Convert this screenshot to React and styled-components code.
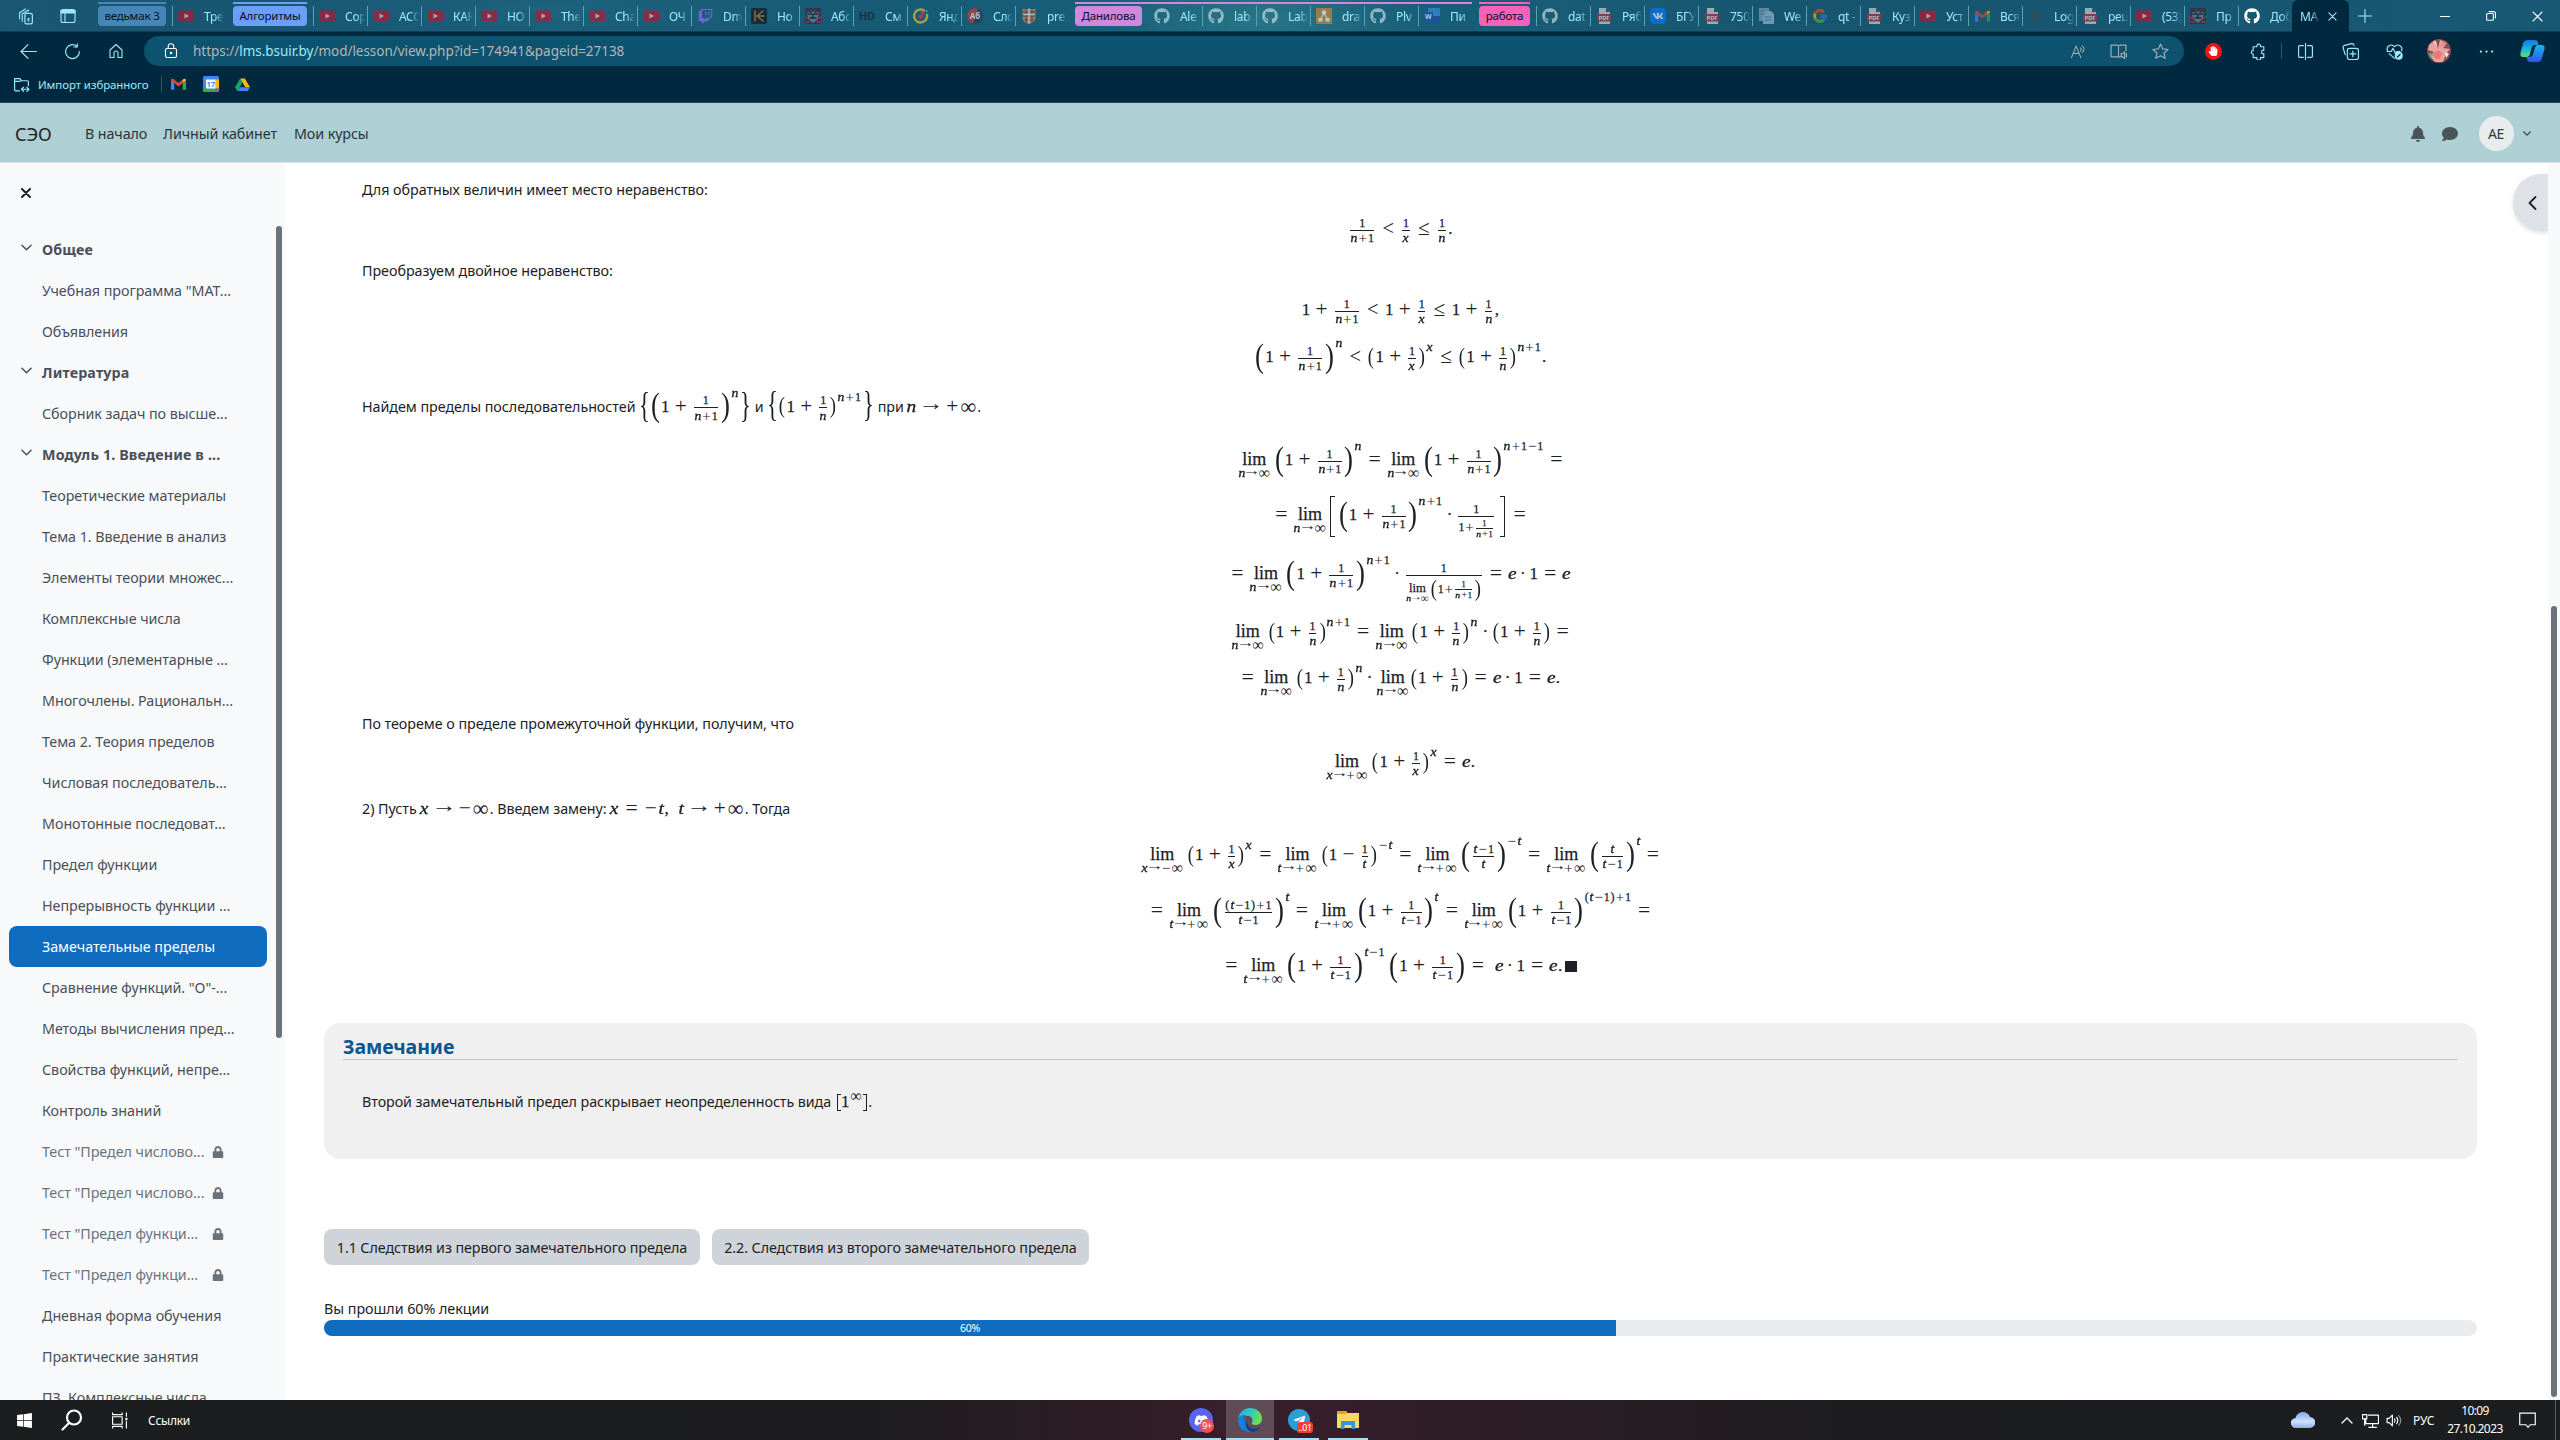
import React from "react";
import styled, { createGlobalStyle, css } from "styled-components";
import {
  FaGithub, FaTwitch, FaVk, FaDiscord, FaTelegramPlane, FaBell, FaComment,
  FaLock, FaHandPaper, FaWindows, FaGraduationCap,
} from "react-icons/fa";
import { FcGoogle } from "react-icons/fc";

const GlobalStyle = createGlobalStyle`
  * { box-sizing: border-box; }
  html, body { margin: 0; padding: 0; overflow: hidden; background: #fff; }
  body { font-family: "Noto Sans", "Open Sans", sans-serif; font-size: 14.3px; color: #1d2125; }
  svg { display: block; flex: none; }
`;

const Screen = styled.div`
  width: 2560px;
  height: 1440px;
  display: flex;
  flex-direction: column;
  overflow: hidden;
`;

/* ---------- browser chrome ---------- */

const TabStrip = styled.div`
  height: 32px;
  flex: none;
  display: flex;
  align-items: flex-start;
  color: #9cebfc;
  font-size: 12px;
  background:
    radial-gradient(ellipse 160px 60px at 1260px 20px, rgba(60, 140, 145, 0.45), transparent),
    radial-gradient(ellipse 300px 50px at 560px 10px, rgba(40, 115, 140, 0.45), transparent),
    linear-gradient(90deg, #1b5672, #155672 25%, #19627d 50%, #18566f 70%, #185875);
  box-shadow: inset 0 -1px 0 #123f57;
`;

const StripButton = styled.div`
  width: ${(p) => p.$w}px;
  height: 32px;
  display: flex;
  align-items: center;
  justify-content: center;
  color: ${(p) => p.$color || "#9cebfc"};
`;

const TabGroup = styled.div`
  display: flex;
  margin-left: ${(p) => p.$ml || 0}px;
  margin-top: 2px;
  padding-top: 2px;
  border-top: 2px solid ${(p) => p.$color};
`;

const GroupChip = styled.div`
  width: ${(p) => p.$w}px;
  height: 20px;
  border-radius: 4px;
  background: ${(p) => p.$color};
  color: #0a0f1c;
  font-size: 11.5px;
  letter-spacing: -0.2px;
  line-height: 20px;
  text-align: center;
  white-space: nowrap;
`;

const TabBox = styled.div`
  width: 54px;
  height: 20px;
  margin-top: ${(p) => (p.$grouped ? 0 : 6)}px;
  border-left: 1px solid ${(p) => (p.$first ? "transparent" : "#58a3b8")};
  padding-left: 5px;
  display: flex;
  align-items: center;
  gap: 10px;
`;

const TabIcon = styled.span`
  width: 16px;
  flex: none;
  display: flex;
  justify-content: center;
  opacity: ${(p) => (p.$bright ? 1 : 0.65)};
`;

const TabText = styled.span`
  width: 20px;
  overflow: hidden;
  white-space: nowrap;
  letter-spacing: -0.3px;
  mask-image: linear-gradient(90deg, #000 55%, transparent 100%);
`;

const ActiveTab = styled.div`
  width: 57px;
  height: 32px;
  padding: 0 10px 0 8px;
  border-radius: 6px 6px 0 0;
  background: #00293f;
  display: flex;
  align-items: center;
  gap: 8px;
`;

const WindowButtons = styled.div`
  margin-left: auto;
  display: flex;
`;

const Toolbar = styled.div`
  height: 38px;
  flex: none;
  display: flex;
  align-items: center;
  background: #00293f;
  color: #9cebfc;
`;

const Slot = styled.div`
  width: ${(p) => p.$w}px;
  display: flex;
  align-items: center;
  justify-content: center;
  flex: none;
  color: ${(p) => p.$color || "inherit"};
`;

const AddressBar = styled.div`
  width: 2040px;
  height: 30px;
  flex: none;
  border-radius: 15px;
  background: #0d526e;
  display: flex;
  align-items: center;
  padding-left: 19px;
`;

const Url = styled.div`
  margin-left: 15px;
  flex: 1;
  font-size: 13.5px;
  letter-spacing: -0.04px;
  color: #b5b5b5;
  b { font-weight: 400; color: #9cebfc; }
`;

const VLine = styled.div`
  width: 1px;
  height: ${(p) => p.$h}px;
  background: ${(p) => p.$color || "#33566a"};
`;

const FavBar = styled.div`
  height: 33px;
  flex: none;
  display: flex;
  align-items: center;
  padding: 0 0 4px 13px;
  background: #00293f;
  color: #9cebfc;
  font-size: 12px;
  border-bottom: 1px solid #1c4c63;
`;

const FavText = styled.span`
  width: 111px;
  margin: 0 12px 0 8px;
  font-size: 11.5px;
  letter-spacing: -0.1px;
  white-space: nowrap;
`;

/* ---------- site header ---------- */

const SiteHeader = styled.div`
  height: 60px;
  flex: none;
  display: flex;
  align-items: center;
  padding: 2px 0 0 15px;
  background: #aed0d4;
  border-bottom: 1px solid #d5e5e9;
  white-space: nowrap;
`;

const Brand = styled.div`
  width: 70px;
  font-size: 18px;
  letter-spacing: -0.1px;
`;

const NavLink = styled.div`
  width: ${(p) => p.$w}px;
  letter-spacing: -0.1px;
  color: #2a3439;
`;

const HeaderTools = styled.div`
  margin-left: auto;
  display: flex;
  align-items: center;
  color: #4a5559;
`;

const Avatar = styled.div`
  width: 35px;
  height: 35px;
  border-radius: 50%;
  background: #e9ecef;
  color: #343a40;
  font-size: 14px;
  letter-spacing: -0.3px;
  display: flex;
  align-items: center;
  justify-content: center;
`;

/* ---------- body ---------- */

const Body = styled.div`
  height: 1237px;
  flex: none;
  display: flex;
`;

const Sidebar = styled.div`
  width: 285px;
  flex: none;
  display: flex;
  background: #f8f9fb;
`;

const SideColumn = styled.div`
  width: 276px;
  padding-left: 9px;
  overflow: hidden;
`;

const CloseRow = styled.div`
  height: 66px;
  padding: 25px 0 0 12px;
`;

const SideItem = styled.div`
  width: 258px;
  height: 41px;
  border-radius: 8px;
  display: flex;
  align-items: center;
  padding-left: 12px;
  white-space: nowrap;
  letter-spacing: ${(p) => (p.$bold ? "0.15px" : "-0.04px")};
  font-weight: ${(p) => (p.$bold ? 700 : 400)};
  color: ${(p) => (p.$active ? "#fff" : p.$dim ? "#6a737b" : "#495057")};
  background: ${(p) => (p.$active ? "#0f6cbf" : "transparent")};
`;

const SideMark = styled.span`
  width: 21px;
  padding-bottom: 4px;
`;

const SideLabel = styled.span`
  width: ${(p) => (p.$dim ? 170 : 201)}px;
`;

const SideThumb = styled.div`
  width: 6px;
  height: 812px;
  margin-top: 63px;
  border-radius: 3px;
  background: #6a737b;
`;

const Content = styled.div`
  width: 2153px;
  margin-left: 39px;
  padding-top: 14px;
`;

const MathInline = styled.span`
  display: inline-flex;
  align-items: center;
  font: 17px "Liberation Serif", serif;
  letter-spacing: 0;
  color: #1d2125;
  -webkit-text-stroke: 0.25px #1d2125;
`;

const Para = styled.div`
  height: ${(p) => p.$h || 24}px;
  margin-top: ${(p) => p.$mt || 0}px;
  padding-left: 38px;
  display: flex;
  align-items: center;
  white-space: pre;
  letter-spacing: -0.04px;
  ${MathInline} { margin-top: 3px; margin-left: ${(p) => p.$pull || 0}px; }
`;

const NoteBox = styled.div`
  height: 136px;
  margin-top: 36px;
  border-radius: 16px;
  background: #f0f0f0;
  padding: 9px 19px 0;
`;

const NoteTitle = styled.div`
  height: 28px;
  border-bottom: 1px solid #9fd2fb;
  color: #0a568f;
  font-size: 19.5px;
  font-weight: 700;
  letter-spacing: -0.1px;
  line-height: 29px;
`;

const NoteText = styled(Para)`
  padding-left: 19px;
  margin-top: 29px;
  letter-spacing: -0.07px;
`;

const ButtonRow = styled.div`
  display: flex;
  gap: 12px;
  margin-top: 70px;
`;

const LessonButton = styled.div`
  width: ${(p) => p.$w}px;
  height: 36px;
  border-radius: 8px;
  background: #ced4da;
  line-height: 37px;
  text-align: center;
  white-space: nowrap;
  letter-spacing: -0.08px;
`;

const ProgressLabel = styled.div`
  height: 24px;
  margin-top: 31px;
  line-height: 26px;
  letter-spacing: -0.03px;
`;

const ProgressTrack = styled.div`
  height: 16px;
  border-radius: 8px;
  background: #e9ecef;
  overflow: hidden;
`;

const ProgressFill = styled.div`
  width: 60%;
  height: 16px;
  background: #0f6cbf;
  color: #fff;
  font-size: 10.5px;
  letter-spacing: -0.3px;
  line-height: 16px;
  text-align: center;
`;

const RightColumn = styled.div`
  margin-left: auto;
  display: flex;
`;

const DrawerToggle = styled.div`
  width: 35px;
  height: 57px;
  margin-top: 11px;
  border-radius: 28px 0 0 28px;
  background: #dee2e6;
  box-shadow: 0 2px 4px rgba(0, 0, 0, 0.12);
  display: flex;
  align-items: center;
  padding-left: 15px;
`;

const PageScroll = styled.div`
  width: 12px;
  background: #f8f9fa;
  padding: 443px 0 0 3px;
`;

const PageThumb = styled.div`
  width: 6px;
  height: 791px;
  border-radius: 3px;
  background: #6a737b;
`;

/* ---------- formulas ---------- */

const Run = styled.span`
  display: inline-flex;
  height: 1em;
  margin-bottom: 0.175em;
`;

const Glyph = styled.span`
  display: inline-flex;
  justify-content: center;
  width: ${(p) => p.$w}em;
  margin: 0 ${(p) => p.$gap}em;
  line-height: 1em;
  ${(p) => p.$it && css`
    font-style: italic;
    -webkit-text-stroke-width: 0.35px;
    transform: scaleX(1.14);
  `}
  ${(p) => p.$zoom && css`
    font-size: ${p.$zoom}em;
    line-height: ${1 / p.$zoom}em;
    width: ${p.$w / p.$zoom}em;
    margin: 0 ${p.$gap / p.$zoom}em;
    -webkit-text-stroke-width: 0;
  `}
  ${(p) => p.$arrow && css`transform: translateY(-0.13em) scaleX(1.3);`}
`;

const Formula = styled.div`
  height: 40px;
  margin-top: ${(p) => p.$mt}px;
  display: flex;
  align-items: center;
  justify-content: center;
  ${MathInline} > ${Run}:first-child > ${Glyph}:first-child { margin-left: 0; }
  ${MathInline} > ${Run}:last-child > ${Glyph}:last-child { margin-right: 0; }
`;

const FracBox = styled.span`
  display: inline-grid;
  grid-template-rows: 1fr 1px 1fr;
  justify-items: center;
  font-size: 0.707em;
  margin: 0 0.18em;
`;

const FracNum = styled.span`
  display: flex;
  align-items: center;
  align-self: end;
  margin-bottom: -0.13em;
`;

const FracBar = styled.span`
  width: 100%;
  height: 1px;
  background: #1d2125;
`;

const FracDen = styled.span`
  display: flex;
  align-items: center;
  align-self: start;
  padding-top: ${(p) => (p.$deep ? 0 : 0.14)}em;
`;

const Sup = styled.span`
  display: inline-flex;
  font-size: 0.707em;
  margin-right: 0.07em;
  padding-bottom: ${(p) => p.$lift * 2}px;
`;

const LimBox = styled.span`
  display: inline-grid;
  grid-template-rows: 1fr auto 1fr;
  justify-items: center;
  margin-right: ${(p) => (p.$tight ? 0.02 : 0.18)}em;
`;

const LimWord = styled.span`
  height: 1em;
  line-height: 0.86em;
  font-size: 1.06em;
`;

const LimUnder = styled.span`
  display: flex;
  font-size: 0.707em;
  margin-top: -0.25em;
`;

const Delim = styled.span`
  width: ${(p) => p.$w}px;
  height: ${(p) => p.$h}px;
  display: inline-flex;
  justify-content: center;
  font-size: ${(p) => p.$h * 1.16}px;
  line-height: ${(p) => p.$h * 0.84}px;
  -webkit-text-stroke-width: 0;
  span { transform: scaleX(${(p) => p.$sx || 0.8}); }
`;

const Bracket = styled.span`
  width: ${(p) => p.$w}px;
  height: ${(p) => p.$h}px;
  border: 1px solid #1d2125;
  border-${(p) => (p.$right ? "left" : "right")}: 0;
  margin: 0 ${(p) => p.$m || 0}px;
`;

const Gap = styled.span`
  width: ${(p) => p.$w}px;
`;

const EndMark = styled.span`
  width: 12px;
  height: 11px;
  margin: 0 0 2px 2px;
  background: #1d2125;
`;

const K = 1.06;
const WIDTHS = {
  n: 0.6, x: 0.572, t: 0.361, e: 0.466, "+": 0.778, "−": 0.778, "=": 0.778, "<": 0.778, "≤": 0.778,
  "→": 1, "∞": 1, "·": 0.278, ".": 0.278, ",": 0.278, "(": 0.389, ")": 0.389,
};
const ZOOMS = { "∞": 1.3, "→": 1.15, "+": 1.25, "−": 1.25, "=": 1.28, "<": 1.2, "≤": 1.25 };
const RELATIONS = "=<≤→";
const BINARIES = "+−·";

function M({ children, tight, unary }) {
  return (
    <Run>
      {[...children].map((c, i) => {
        const gap = tight || (unary && c !== "=" && c !== "→") ? 0 : RELATIONS.includes(c) ? 0.278 : BINARIES.includes(c) ? 0.222 : 0;
        return (
          <Glyph key={i} $w={(WIDTHS[c] || 0.5) * K} $gap={gap * K} $it={"nxte".includes(c)} $zoom={ZOOMS[c]} $arrow={c === "→"}>
            {c}
          </Glyph>
        );
      })}
    </Run>
  );
}

function Frac({ n, d, deep }) {
  return (
    <FracBox>
      <FracNum>{typeof n === "string" ? <M tight>{n}</M> : n}</FracNum>
      <FracBar />
      <FracDen $deep={deep}>{typeof d === "string" ? <M tight>{d}</M> : d}</FracDen>
    </FracBox>
  );
}

function Paren({ h = 29, pow, children }) {
  const w = h > 25 ? 10.6 : 8;
  return (
    <>
      <Delim $w={w} $h={h}><span>(</span></Delim>
      {children}
      <Delim $w={w} $h={h}><span>)</span></Delim>
      {pow && <Sup $lift={h > 25 ? 13.5 : 9.5}><M tight>{pow}</M></Sup>}
    </>
  );
}

function Lim({ to = "n→∞", tight }) {
  return (
    <LimBox $tight={tight}>
      <span />
      <LimWord>lim</LimWord>
      <LimUnder><M tight>{to}</M></LimUnder>
    </LimBox>
  );
}

const Sum = ({ d, op = "+" }) => (<><M>{"1" + op}</M><Frac n="1" d={d} /></>);
const Row = ({ mt, children }) => (<Formula $mt={mt}><MathInline>{children}</MathInline></Formula>);

/* ---------- icons ---------- */

const Svg = ({ s = 16, w, h, vb, children, ...rest }) => (
  <svg width={w || s} height={h || s} viewBox={vb || "0 0 16 16"} fill="none" stroke="currentColor" strokeWidth="1.1" strokeLinecap="round" strokeLinejoin="round" {...rest}>{children}</svg>
);

const YouTube = () => (
  <Svg stroke="none"><rect y="2.5" width="16" height="11" rx="3" fill="#c3122c" /><path d="M6.5 5.5v5L11 8z" fill="#e8d6da" /></Svg>
);
const Pdf = () => (
  <Svg stroke="none">
    <path d="M3 0h7l4 4v12H3z" fill="#d5dcdf" /><path d="M10 0v4h4z" fill="#274a5c" />
    <rect x="1" y="6" width="14" height="7.5" rx="1" fill="#b8323c" />
    <text x="8" y="12" textAnchor="middle" fontSize="5.4" fontWeight="700" fontFamily="Noto Sans" fill="#fff">PDF</text>
  </Svg>
);
const Art = () => (
  <Svg stroke="none"><rect width="16" height="16" fill="#4a2434" /><path d="M2 5l3-3 3 2 3-2 3 3-1 6-5 4-5-4z" fill="#77828f" /><path d="M3 6h4M9 6h4M5 10h6M8 7v2M4 3l2 1M12 3l-2 1" stroke="#1d1a24" strokeWidth="1.5" /><path d="M0 9l2 1M16 9l-2 1M1 14h3M12 14h3" stroke="#c01c2c" strokeWidth="1.8" /></Svg>
);
const Kaggle = () => (
  <Svg stroke="none"><rect width="16" height="16" rx="2" fill="#161616" /><path d="M4 3v10M6 8l6-5M6 8h7M6 8l6 5" stroke="#c9772c" strokeWidth="1.5" /></Svg>
);
const Hd = () => (<Svg stroke="none"><text x="8" y="12" textAnchor="middle" fontSize="11" fontWeight="700" fontFamily="Liberation Sans" fill="#1c1c1c">HD</text></Svg>);
const Music = () => (
  <Svg><path d="M11 2.500A6.500 6.500 0 1 0 14 7" stroke="#f4c524" strokeWidth="2.400" /><circle cx="7.500" cy="9" r="2" fill="#f33" stroke="none" /><path d="M9 9V3l2 2" stroke="#f33" strokeWidth="1.600" /><circle cx="13.700" cy="3.200" r="1" fill="#4cf" stroke="none" /></Svg>
);
const Translate = () => (
  <Svg stroke="none"><circle cx="8" cy="8" r="8" fill="#333b46" /><path d="M8 0a8 8 0 0 0-2 15.700L11 0.600z" fill="#d23a35" /><text x="8" y="11" textAnchor="middle" fontSize="8" fontWeight="700" fontFamily="Noto Sans" fill="#fff">Aб</text></Svg>
);
const Shield = () => (
  <Svg stroke="none"><path d="M1.500 1h13v8c0 4-3 6-6.500 7-3.500-1-6.500-3-6.500-7z" fill="#c9a24a" /><path d="M2 4h12M2 8h12M4 12h8M5 1v13M8 1v14M11 1v13" stroke="#a23a4a" strokeWidth="1.300" /><path d="M8 1v14M3 6.500h10" stroke="#eee" strokeWidth="1.600" /></Svg>
);
const Drawio = () => (
  <Svg stroke="none"><rect width="16" height="16" rx="1" fill="#d9862a" /><path d="M8 5l-3.500 6M8 5l3.500 6" stroke="#fff" /><rect x="6" y="2.500" width="4" height="3.500" fill="#fff" /><rect x="2.500" y="10" width="4" height="3.500" fill="#fff" /><rect x="9.500" y="10" width="4" height="3.500" fill="#fff" /></Svg>
);
const Word = () => (
  <Svg stroke="none"><rect x="4" width="12" height="16" rx="1" fill="#3f8fe0" /><rect x="4" y="8" width="12" height="8" fill="#1c4fa8" /><rect y="4" width="9" height="9" rx="1" fill="#1a53ac" /><text x="4.500" y="11" textAnchor="middle" fontSize="7" fontWeight="700" fontFamily="Noto Sans" fill="#fff">W</text></Svg>
);
const Vk = () => (<Svg stroke="none"><rect width="16" height="16" rx="4" fill="#0a77ff" /><FaVk x="2.500" y="2.500" size={11} color="#fff" /></Svg>);
const Docs = () => (
  <Svg stroke="none"><path d="M1 0h10v13H1z" fill="#7fa8c4" /><path d="M5 3h8l3 3v10H5z" fill="#9fc0d6" /><path d="M3 3h4M3 6h4M7 9h6M7 12h6" stroke="#4f7f9e" /></Svg>
);
const Gmail = ({ s = 15 }) => (
  <Svg s={s} stroke="none"><path d="M0 3v10.500h3.500V6L0 3z" fill="#4285f4" /><path d="M12.500 6v7.500H16V3z" fill="#34a853" /><path d="M0 3.500L8 10l8-6.500c0-1.500-2-2-3-1L8 6.500l-5-4c-1-1-3-.500-3 1z" fill="#ea4335" /><path d="M12.500 6L16 3.500c0-1.500-2-2-3.500-.8z" fill="#fbbc04" /></Svg>
);
const Calendar = () => (
  <Svg stroke="none"><rect width="16" height="16" rx="1.500" fill="#4285f4" /><path d="M12.500 3.500H16v9h-3.500z" fill="#fbbc04" /><path d="M0 12.500h12.500V16H1.500A1.500 1.500 0 0 1 0 14.500z" fill="#34a853" /><path d="M12.500 16v-3.500H16z" fill="#ea4335" /><rect x="3" y="3.500" width="9.500" height="9" fill="#fff" /><text x="7.700" y="11" textAnchor="middle" fontSize="7.500" fontWeight="700" fontFamily="Noto Sans" fill="#4285f4">17</text></Svg>
);
const Drive = () => (
  <Svg s={15} stroke="none"><path d="M5.500 1.500h5L16 11h-5z" fill="#fbbc04" /><path d="M5.500 1.500L0 11l2.500 4L8 5.800z" fill="#1ea362" /><path d="M5 11h11l-2.500 4h-11z" fill="#4285f4" /></Svg>
);
const Chevron = ({ w = 12, h = 7, sw = 1.6 }) => (<Svg w={w} h={h} vb="0 0 12 7" strokeWidth={sw}><path d="M1 1l5 5 5-5" /></Svg>);
const Cross = ({ s = 10, sw = 1.2 }) => (<Svg s={s} vb="0 0 10 10" strokeWidth={sw}><path d="M1 1l8 8M9 1l-8 8" /></Svg>);

const Edge = () => (
  <svg width="24" height="24" viewBox="0 0 24 24">
    <defs>
      <linearGradient id="edgeTop" x1="0" y1="0" x2="1" y2="0.3"><stop offset="0" stopColor="#28a9ea" /><stop offset="0.6" stopColor="#35c9c0" /><stop offset="1" stopColor="#6be04c" /></linearGradient>
      <linearGradient id="edgeLow" x1="0" y1="0" x2="1" y2="1"><stop offset="0" stopColor="#1b8de0" /><stop offset="1" stopColor="#0c4fa0" /></linearGradient>
    </defs>
    <path d="M.2 10.500C1.300 4.500 6 0 12 0c7 0 12 5 12 10.500 0 4-2.800 6.500-6.500 6.500-3 0-4.300-1.200-3.700-2.200 1.700-2.500.5-7-5-7C4.500 7.800.8 8.500.2 10.500z" fill="url(#edgeTop)" />
    <path d="M.1 11C.6 8.600 4 6.500 8.200 7 5 9 4.500 13 6.500 17c1.700 3.600 5 6 8.500 6.600C7 25.500-.5 20 .1 11z" fill="#1683d8" />
    <path d="M8.700 9.500c-2.500 2.500-2 7 .5 9.500 3.200 3 8.800 3.200 12.800.2C18 24.500 12.500 25 8.500 21.500 4.500 18 4.500 11 8.700 9.500z" fill="url(#edgeLow)" />
    <path d="M9 12c-1.500 5 3.500 9.500 9 8.800 1.500-.3 3-.8 4-1.700-1.500 2.500-4 4.300-7 4.700C9.500 23.500 6 17 9 12z" fill="#0d3f85" />
  </svg>
);
const Copilot = () => (
  <svg width="25" height="24" viewBox="0 0 25 24">
    <defs>
      <linearGradient id="copA" x1="0" y1="0" x2="0" y2="1"><stop offset="0" stopColor="#1577e6" /><stop offset="0.5" stopColor="#16b4df" /><stop offset="1" stopColor="#5fdc7a" /></linearGradient>
      <linearGradient id="copB" x1="0" y1="0" x2="0" y2="1"><stop offset="0" stopColor="#17b5ee" /><stop offset="1" stopColor="#2f55e8" /></linearGradient>
    </defs>
    <path d="M8 1h7c2 0 2.500 1 3 3l.5 2h-4c-2 0-2.500 1-3 3l-1.500 6c-.5 2-1.500 3-3.500 3H3c-2 0-3-1.500-2.500-4l2.500-9c.8-3 2-4 5-4z" fill="url(#copA)" />
    <path d="M17 23h-7c-2 0-2.500-1-3-3l-.5-2h3c2 0 3-1 3.500-3L15 9c.5-2 1.500-3 3.500-3H22c2 0 3 1.500 2.500 4L22 19c-.8 3-2 4-5 4z" fill="url(#copB)" />
  </svg>
);

const gh = (b) => <FaGithub size={16} color={b ? "#fff" : "#cfe2ea"} />;
const MAIN_TABS = [
  [<YouTube />, "Соp"], [<YouTube />, "АСО"], [<YouTube />, "КАК"], [<YouTube />, "НО"], [<YouTube />, "The"], [<YouTube />, "Cha"], [<YouTube />, "ОЧ"],
  [<FaTwitch size={15} color="#9a6cff" />, "Dm"], [<Kaggle />, "Ho"], [<Art />, "Абс"], [<Hd />, "См"], [<Music />, "Янд"], [<Translate />, "Сло"], [<Shield />, "pre"],
];
const DANILOVA_TABS = [[gh(), "Ale"], [gh(), "lab"], [gh(), "Lab"], [<Drawio />, "dra"], [gh(), "Plv"], [<Word />, "Пи"]];
const WORK_TABS = [
  [gh(), "dat"], [<Pdf />, "Ряб"], [<Vk />, "БГУ"], [<Pdf />, "750"], [<Docs />, "We"], [<FcGoogle size={16} />, "qt -"], [<Pdf />, "Куз"], [<YouTube />, "Уст"],
  [<Gmail />, "Вся"], [<FaGraduationCap size={15} color="#3c4850" />, "Log"], [<Pdf />, "рец"], [<YouTube />, "(53)"], [<Art />, "Пр"], [gh(true), "Доб", true],
];

const Tab = ({ data, grouped, first }) => (
  <TabBox $grouped={grouped} $first={first}>
    <TabIcon $bright={data[2]}>{data[0]}</TabIcon>
    <TabText>{data[1]}</TabText>
  </TabBox>
);

/* ---------- taskbar ---------- */

const Taskbar = styled.div`
  height: 40px;
  flex: none;
  display: flex;
  align-items: center;
  color: #fff;
  background: linear-gradient(90deg, #1b1d1f 0, #1d1d1f 34%, #2a1c22 42%, #371f2b 48%, #351f2a 52%, #2a1c24 60%, #1d1d20 72%, #1b1d1f 100%);
`;

const TaskText = styled.div`
  margin-left: 6px;
  width: 980px;
  font-size: 12px;
  letter-spacing: -0.25px;
`;

const TaskApp = styled.div`
  width: ${(p) => p.$w}px;
  height: 40px;
  margin-right: ${(p) => p.$mr}px;
  display: flex;
  align-items: center;
  justify-content: center;
  border-bottom: 2px solid #a9ddf7;
  padding-top: 2px;
  background: ${(p) => (p.$on ? "#5f4c56" : "transparent")};
`;

const AppDisc = styled.div`
  position: relative;
  width: ${(p) => p.$s}px;
  height: ${(p) => p.$s}px;
  border-radius: 50%;
  background: ${(p) => p.$bg};
  display: flex;
  align-items: center;
  justify-content: center;
`;

const Badge = styled.span`
  position: absolute;
  left: ${(p) => p.$x}px;
  top: ${(p) => p.$y}px;
  width: ${(p) => p.$w}px;
  height: ${(p) => p.$h}px;
  border-radius: ${(p) => p.$r}px;
  background: ${(p) => p.$bg};
  color: #fff;
  font-size: 9px;
  letter-spacing: -0.4px;
  line-height: ${(p) => p.$h}px;
  text-align: center;
`;

const Tray = styled.div`
  margin-left: auto;
  display: flex;
  align-items: center;
`;

const Lang = styled.div`
  width: 34px;
  padding-left: 3px;
  font-size: 12px;
  letter-spacing: -0.1px;
`;

const Clock = styled.div`
  width: 62px;
  font-size: 12px;
  line-height: 18px;
  letter-spacing: -0.6px;
  text-align: center;
`;

const SIDE = [
  ["Общее", "b"], ['Учебная программа "МАТ...'], ["Объявления"], ["Литература", "b"], ["Сборник задач по высше..."],
  ["Модуль 1. Введение в ...", "b"], ["Теоретические материалы"], ["Тема 1. Введение в анализ"], ["Элементы теории множес..."],
  ["Комплексные числа"], ["Функции (элементарные ..."], ["Многочлены. Рациональн..."], ["Тема 2. Теория пределов"],
  ["Числовая последователь..."], ["Монотонные последоват..."], ["Предел функции"], ["Непрерывность функции ..."],
  ["Замечательные пределы", "a"], ['Сравнение функций. "О"-...'], ["Методы вычисления пред..."], ["Свойства функций, непре..."],
  ["Контроль знаний"], ['Тест "Предел числово...', "l"], ['Тест "Предел числово...', "l"], ['Тест "Предел функци...', "l"],
  ['Тест "Предел функци...', "l"], ["Дневная форма обучения"], ["Практические занятия"], ["ПЗ. Комплексные числа"],
];

export default function App() {
  return (
    <Screen>
      <GlobalStyle />
      <TabStrip>
        <StripButton $w={52}><Svg s={17}><rect x="6.500" y="5" width="7" height="10" rx="1.500" /><path d="M4 12.500V5.500L10 2M1.500 10V4.500L7 1" /><path d="M10.500 10h-1v2h1" /></Svg></StripButton>
        <StripButton $w={32}><Svg s={16}><rect x="1" y="1.500" width="14" height="13" rx="2" /><path d="M1 2.500h14v2.500H1z" fill="currentColor" /><path d="M5 5v9" /></Svg></StripButton>
        <TabGroup $ml={14} $color="#4687b8"><GroupChip $w={68} $color="#4687b8">ведьмак 3</GroupChip></TabGroup>
        <Gap $w={6} />
        <Tab data={[<YouTube />, "Тре"]} />
        <Gap $w={7} />
        <TabGroup $color="#6b9ffa"><GroupChip $w={74} $color="#6b9ffa">Алгоритмы</GroupChip></TabGroup>
        <Gap $w={6} />
        {MAIN_TABS.map((t, i) => <Tab key={i} data={t} />)}
        <Gap $w={6} />
        <TabGroup $color="#d087dc">
          <GroupChip $w={67} $color="#d087dc">Данилова</GroupChip>
          <Gap $w={6} />
          {DANILOVA_TABS.map((t, i) => <Tab key={i} data={t} grouped first={i === 0} />)}
        </TabGroup>
        <Gap $w={7} />
        <TabGroup $color="#f462bb"><GroupChip $w={51} $color="#f462bb">работа</GroupChip></TabGroup>
        <Gap $w={6} />
        {WORK_TABS.map((t, i) => <Tab key={i} data={t} />)}
        <ActiveTab><TabText>МА</TabText><Cross s={9} /></ActiveTab>
        <StripButton $w={32}><Svg s={14} vb="0 0 14 14"><path d="M7 0.500v13M.5 7h13" /></Svg></StripButton>
        <WindowButtons>
          <StripButton $w={46} $color="#fff"><Svg s={10} vb="0 0 10 10" strokeWidth="1.200"><path d="M0 5.500h10" /></Svg></StripButton>
          <StripButton $w={46} $color="#fff"><Svg s={10} vb="0 0 10 10"><rect x=".6" y="2.500" width="6.800" height="6.800" rx="1" /><path d="M3 .6h4.500a2 2 0 0 1 2 2V7" /></Svg></StripButton>
          <StripButton $w={46} $color="#fff"><Cross s={11} /></StripButton>
        </WindowButtons>
      </TabStrip>

      <Toolbar>
        <Slot $w={56}><Svg s={17}><path d="M15.500 8H1M7.500 1.500L1 8l6.500 6.500" /></Svg></Slot>
        <Slot $w={32}><Svg s={17}><path d="M14.500 8A6.500 6.500 0 1 1 12 3M12.500 .8v3H9.300" /></Svg></Slot>
        <Slot $w={56}><Svg s={16}><path d="M2 7l6-5.500L14 7v7.500h-4V10a2 2 0 0 0-4 0v4.500H2z" /></Svg></Slot>
        <AddressBar>
          <Slot $w={15} $color="#fff"><Svg s={16}><rect x="2.500" y="5.500" width="11" height="9" rx="1.500" /><path d="M5.200 5.500V3.500a2.800 2.800 0 0 1 5.600 0v2" /><circle cx="8" cy="10" r=".7" fill="#fff" /></Svg></Slot>
          <Url>https://<b>lms.bsuir.by</b>/mod/lesson/view.php?id=174941&amp;pageid=27138</Url>
          <Slot $w={40} $color="#9db0b8"><Svg s={15}><path d="M.5 14.500L5.500 2l5 12.500M2.500 10h6M10 4c1 1 1 2.500 0 3.500M12 2c2.500 2 2.500 5 0 7" /></Svg></Slot>
          <Slot $w={40} $color="#9db0b8"><Svg s={17}><path d="M8 2.500v10.500M8 13H1V2h6l1 .7L9 2h6v5M8 13h1.500M10.500 10v3h1.500l1.800 1.700V8.300L12 10zM15.500 10v3" /></Svg></Slot>
          <Slot $w={44} $color="#9db0b8"><Svg s={17}><path d="M8 1l2.100 4.600 5 .5-3.800 3.300 1.100 5L8 11.900 3.600 14.400l1.100-5L.9 6.100l5-.5z" /></Svg></Slot>
          <Gap $w={2} />
        </AddressBar>
        <Slot $w={58}><AppDisc $s={17} $bg="#f01414"><FaHandPaper size={10} color="#fff" /></AppDisc></Slot>
        <Slot $w={32}><Svg s={17}><path d="M5 3.500h1.500a1.800 1.800 0 1 1 3.400 0H13V7h-.6a1.600 1.600 0 1 0 0 3.200h.6v3.500H9.900a1.800 1.800 0 1 1-3.400 0H3V10.500a1.700 1.700 0 1 1 0-3.400V3.500z" /></Svg></Slot>
        <Slot $w={14}><VLine $h={16} /></Slot>
        <Slot $w={34}><Svg s={17}><path d="M6 2.500H2.500a1 1 0 0 0-1 1v9a1 1 0 0 0 1 1H6M10 2.500h3.500a1 1 0 0 1 1 1v9a1 1 0 0 1-1 1H10M8 .5v15" /></Svg></Slot>
        <Slot $w={56}><Svg s={17}><rect x="5" y="5" width="10.500" height="10.500" rx="2" /><path d="M10.200 7.500v5.500M7.500 10.200H13M3 11L1 4.500a2 2 0 0 1 1.400-2.300L9 .6a2 2 0 0 1 2.300 1.600" /></Svg></Slot>
        <Slot $w={32}><Svg s={17}><path d="M1.500 7.500C-.5 3 5 0 8 3.500 11 0 16.500 3 14.500 7.500M1 8h4l1.500-3L9 10l1-2h3M3 10l5 4.500" /><circle cx="12" cy="12" r="3.200" fill="currentColor" /><path d="M10.800 13.200l2.400-2.400" stroke="#00293f" /></Svg></Slot>
        <Slot $w={58}>
          <svg width="24" height="24" viewBox="0 0 24 24"><circle cx="12" cy="12" r="12" fill="#8a4b52" /><path d="M2 6l6-5 3 8 2-8 7 3-4 5 7 1-4 5-3 8H8L3 17l4-4-6-2z" fill="#e8a29d" /><path d="M12 9l5-7 2 2zM6 15l5-4 4 3-2 6H8z" fill="#f07878" /><path d="M1.500 14l5 1-2 4z" fill="#4cc5a5" /><path d="M18 13l4 2-3 4zM9 2l1 6-3-5z" fill="#f5ece8" /></svg>
        </Slot>
        <Slot $w={36}><Svg s={15} stroke="none"><circle cx="2" cy="8" r="1.200" fill="#9cebfc" /><circle cx="8" cy="8" r="1.200" fill="#9cebfc" /><circle cx="14" cy="8" r="1.200" fill="#9cebfc" /></Svg></Slot>
        <Slot $w={56}><Copilot /></Slot>
      </Toolbar>

      <FavBar>
        <Svg s={17}><path d="M6 14H2.500a1 1 0 0 1-1-1V2.500h5l1.500 2h5.500a1 1 0 0 1 1 1V9M1.500 5h5L8 4.500M8 12.500h7M10 10.500l-2 2 2 2M13 10.500l2 2-2 2" /></Svg>
        <FavText>Импорт избранного</FavText>
        <VLine $h={16} />
        <Slot $w={33}><Gmail /></Slot><Slot $w={31}><Calendar /></Slot><Slot $w={32}><Drive /></Slot>
      </FavBar>

      <SiteHeader>
        <Brand>СЭО</Brand>
        <NavLink $w={78}>В начало</NavLink>
        <NavLink $w={131}>Личный кабинет</NavLink>
        <NavLink $w={90}>Мои курсы</NavLink>
        <HeaderTools>
          <Slot $w={32}><FaBell size={16} /></Slot>
          <Slot $w={32}><FaComment size={16} /></Slot>
          <Slot $w={60}><Avatar>АЕ</Avatar></Slot>
          <Slot $w={1}><Chevron w={8} h={5} sw={2} /></Slot>
          <Gap $w={33} />
        </HeaderTools>
      </SiteHeader>

      <Body>
        <Sidebar>
          <SideColumn>
            <CloseRow><Cross s={10} sw={2} /></CloseRow>
            {SIDE.map(([label, kind], i) => (
              <SideItem key={i} $bold={kind === "b"} $active={kind === "a"} $dim={kind === "l"}>
                <SideMark>{kind === "b" && <Chevron w={11} />}</SideMark>
                <SideLabel $dim={kind === "l"}>{label}</SideLabel>
                {kind === "l" && <FaLock size={12} />}
              </SideItem>
            ))}
          </SideColumn>
          <SideThumb />
        </Sidebar>

        <Content>
          <Para>Для обратных величин имеет место неравенство:</Para>
          <Row mt={9}><Frac n="1" d="n+1" /><M>{"<"}</M><Frac n="1" d="x" /><M>≤</M><Frac n="1" d="n" /><M>.</M></Row>
          <Para $mt={8}>Преобразуем двойное неравенство:</Para>
          <Row mt={9}><Sum d="n+1" /><M>{"<"}</M><Sum d="x" /><M>≤</M><Sum d="n" /><M>,</M></Row>
          <Row mt={7}>
            <Paren pow="n"><Sum d="n+1" /></Paren><M>{"<"}</M>
            <Paren h={20} pow="x"><Sum d="x" /></Paren><M>≤</M>
            <Paren h={20} pow="n+1"><Sum d="n" /></Paren><M>.</M>
          </Row>
          <Para $h={40} $mt={8} $pull={-1}>
            {"Найдем пределы последовательностей "}
            <MathInline>
              <Delim $w={12} $h={30} $sx={0.65}><span>{"{"}</span></Delim><Paren pow="n"><Sum d="n+1" /></Paren><Delim $w={12} $h={30} $sx={0.65}><span>{"}"}</span></Delim>
            </MathInline>{" и "}
            <MathInline>
              <Delim $w={12} $h={30} $sx={0.65}><span>{"{"}</span></Delim><Paren h={20} pow="n+1"><Sum d="n" /></Paren><Delim $w={12} $h={30} $sx={0.65}><span>{"}"}</span></Delim>
            </MathInline>{" при "}
            <MathInline><M unary>n→+∞</M></MathInline>.
          </Para>
          <Row mt={15}><Lim /><Paren pow="n"><Sum d="n+1" /></Paren><M>=</M><Lim /><Paren pow="n+1−1"><Sum d="n+1" /></Paren><M>=</M></Row>
          <Row mt={15}>
            <M>=</M><Lim tight /><Bracket $w={5} $h={41} $m={3} />
            <Paren pow="n+1"><Sum d="n+1" /></Paren><M>·</M>
            <Frac n="1" deep d={<><M tight>1+</M><Frac n="1" d="n+1" /></>} />
            <Bracket $w={5} $h={41} $m={3} $right /><M>=</M>
          </Row>
          <Row mt={19}>
            <M>=</M><Lim /><Paren pow="n+1"><Sum d="n+1" /></Paren><M>·</M>
            <Frac n="1" deep d={<><Lim tight /><Paren h={20}><M tight>1+</M><Frac n="1" d="n+1" /></Paren></>} />
            <M>=e·1=e</M>
          </Row>
          <Row mt={18}>
            <Lim /><Paren h={20} pow="n+1"><Sum d="n" /></Paren><M>=</M><Lim /><Paren h={20} pow="n"><Sum d="n" /></Paren>
            <M>·</M><Paren h={20}><Sum d="n" /></Paren><M>=</M>
          </Row>
          <Row mt={6}>
            <M>=</M><Lim /><Paren h={20} pow="n"><Sum d="n" /></Paren><M>·</M><Lim tight /><Paren h={20}><Sum d="n" /></Paren><M>=e·1=e.</M>
          </Row>
          <Para $mt={12}>По теореме о пределе промежуточной функции, получим, что</Para>
          <Row mt={8}><Lim to="x→+∞" /><Paren h={20} pow="x"><Sum d="x" /></Paren><M>=e.</M></Row>
          <Para $mt={13} $pull={-1}>
            {"2) Пусть "}<MathInline><M unary>x→−∞</M></MathInline>{". Введем замену: "}
            <MathInline><M unary>x=−t,</M><Gap $w={9} /><M unary>t→+∞</M></MathInline>. Тогда
          </Para>
          <Row mt={16}>
            <Lim to="x→−∞" /><Paren h={20} pow="x"><Sum d="x" /></Paren><M>=</M>
            <Lim to="t→+∞" /><Paren h={20} pow="−t"><Sum op="−" d="t" /></Paren><M>=</M>
            <Lim to="t→+∞" /><Paren pow="−t"><Frac n="t−1" d="t" /></Paren><M>=</M>
            <Lim to="t→+∞" /><Paren pow="t"><Frac n="t" d="t−1" /></Paren><M>=</M>
          </Row>
          <Row mt={16}>
            <M>=</M><Lim to="t→+∞" /><Paren pow="t"><Frac n="(t−1)+1" d="t−1" /></Paren><M>=</M>
            <Lim to="t→+∞" /><Paren pow="t"><Sum d="t−1" /></Paren><M>=</M>
            <Lim to="t→+∞" /><Paren pow="(t−1)+1"><Sum d="t−1" /></Paren><M>=</M>
          </Row>
          <Row mt={15}>
            <M>=</M><Lim to="t→+∞" /><Paren pow="t−1"><Sum d="t−1" /></Paren><Gap $w={3} />
            <Paren><Sum d="t−1" /></Paren><M>=</M><Gap $w={5} /><M>e·1=e.</M><EndMark />
          </Row>

          <NoteBox>
            <NoteTitle>Замечание</NoteTitle>
            <NoteText>
              {"Второй замечательный предел раскрывает неопределенность вида "}
              <MathInline><Gap $w={2} /><Bracket $w={4} $h={17} /><M>1</M><Sup $lift={5}><M tight>∞</M></Sup><Bracket $w={4} $h={17} $right /><Gap $w={1} /></MathInline>.
            </NoteText>
          </NoteBox>
          <ButtonRow>
            <LessonButton $w={376}>1.1 Следствия из первого замечательного предела</LessonButton>
            <LessonButton $w={377}>2.2. Следствия из второго замечательного предела</LessonButton>
          </ButtonRow>
          <ProgressLabel>Вы прошли 60% лекции</ProgressLabel>
          <ProgressTrack><ProgressFill>60%</ProgressFill></ProgressTrack>
        </Content>

        <RightColumn>
          <DrawerToggle><Svg w={9} h={14} vb="0 0 9 14" strokeWidth="1.800"><path d="M7.500 1L1.500 7l6 6" /></Svg></DrawerToggle>
          <PageScroll><PageThumb /></PageScroll>
        </RightColumn>
      </Body>

      <Taskbar>
        <Slot $w={48}><FaWindows size={17} /></Slot>
        <Slot $w={48}><Svg s={22} vb="0 0 22 22" strokeWidth="2.200"><circle cx="13" cy="8.500" r="7" /><path d="M8 14l-6.500 6.500" /></Svg></Slot>
        <Slot $w={46}><Svg s={17} strokeLinecap="butt"><path d="M1.500 4.500h9v7h-9zM1.500 .5v2h9v-2M1.500 15.500v-2h9v2M14.500 .5v4M14.500 8v7.500" /><path d="M13.500 5.500h2v2h-2z" fill="#fff" stroke="none" /></Svg></Slot>
        <TaskText>Ссылки</TaskText>
        <Gap $w={53} />
        <TaskApp $w={40} $mr={5}>
          <AppDisc $s={24} $bg="#5865f2"><FaDiscord size={15} /><Badge $x={11} $y={11} $w={14} $h={14} $r={7} $bg="#ee5055">9+</Badge></AppDisc>
        </TaskApp>
        <TaskApp $w={48} $mr={5} $on><Edge /></TaskApp>
        <TaskApp $w={40} $mr={9}>
          <AppDisc $s={22} $bg="#27a0d8"><FaTelegramPlane size={13} /><Badge $x={9} $y={13} $w={16} $h={11} $r={3} $bg="#f23c34">..01</Badge></AppDisc>
        </TaskApp>
        <TaskApp $w={40} $mr={0}>
          <svg width="22" height="18" viewBox="0 0 22 18"><path d="M0 0h9l1.500 2H22v15H0z" fill="#ffd766" /><path d="M0 0h9l1 3H0z" fill="#e8a317" /><path d="M4 18v-8h14v8h-3.500v-4h-7v4z" fill="#3b93d9" /></svg>
        </TaskApp>
        <Tray>
          <Slot $w={26}>
            <svg width="24" height="16" viewBox="0 0 24 16"><defs><linearGradient id="cloud" x1="0" y1="0" x2="0" y2="1"><stop offset="0" stopColor="#7da9ee" /><stop offset="0.6" stopColor="#cfe1fc" /><stop offset="1" stopColor="#8ab0ec" /></linearGradient></defs><path d="M5 16a5 5 0 0 1-.5-10C5.500 2.500 8.500 0 12 0c3.500 0 6 2 7 5a5.500 5.500 0 0 1-.5 11z" fill="url(#cloud)" /></svg>
          </Slot>
          <Gap $w={24} />
          <Slot $w={14}><Svg w={12} h={7} vb="0 0 12 7" strokeWidth="1.300"><path d="M1 6l5-5 5 5" /></Svg></Slot>
          <Gap $w={8} />
          <Slot $w={17}><Svg s={17} strokeLinecap="butt"><path d="M5.500 3H15.500v8H3.500V7M10 11v3.500M6 14.500h8M.5 2.500h4v4h-4zM2.500 6.500V13" /></Svg></Slot>
          <Gap $w={7} />
          <Slot $w={17}><Svg s={17}><path d="M1 6v4h2l3 3V3L3 6zM8 6.500c.7 1 .7 2 0 3M10 5c1.500 2 1.500 4 0 6" /><path d="M12 3.500c2.500 3 2.500 6 0 9" opacity=".5" /></Svg></Slot>
          <Gap $w={7} />
          <Lang>РУС</Lang>
          <Clock>10:09<br />27.10.2023</Clock>
          <Gap $w={13} />
          <Slot $w={17}><Svg s={17} strokeLinecap="butt" strokeLinejoin="miter"><path d="M.7 1h14.600v11H10.500L8.500 14.500 6.500 12H.7z" /></Svg></Slot>
          <Gap $w={19} />
          <VLine $h={40} $color="#5b5c5e" />
          <Gap $w={4} />
        </Tray>
      </Taskbar>
    </Screen>
  );
}
